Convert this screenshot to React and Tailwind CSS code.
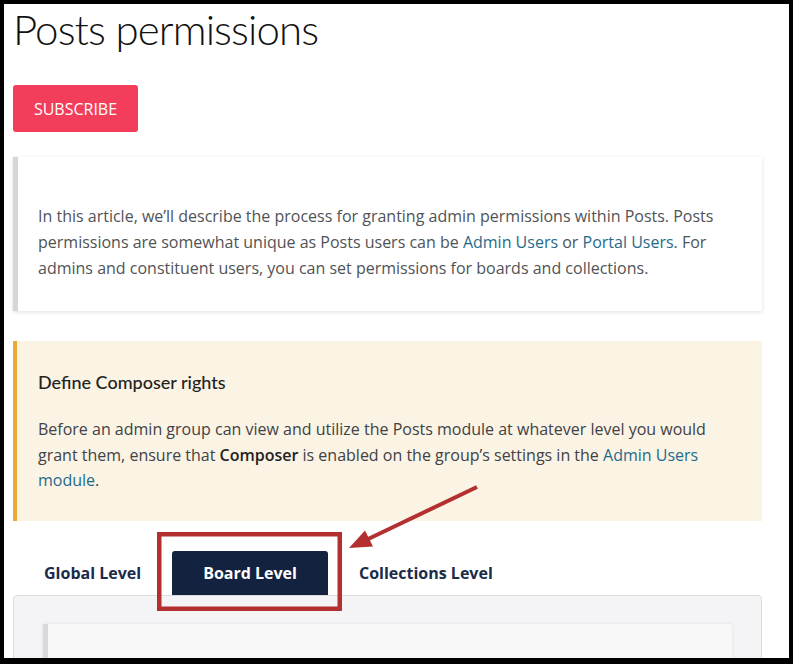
import React from 'react';

const body = { fontFamily: '"Open Sans", "Noto Sans", sans-serif' };
const display = { fontFamily: 'Lato, "Noto Sans", sans-serif' };

const Link = ({ children }) => (
    <a href="#" className="text-[#1f6b8c]">{children}</a>
);

const Tab = ({ label, active }) => (
    <div
        className={`h-[44px] px-[31px] flex items-center text-[16px] font-bold rounded-t-[3px] ${active ? 'bg-[#13223f] text-white' : 'text-[#1b2b4a]'}`}
        style={body}
    >
        {label}
    </div>
);

const App = () => {
    return (
        <div className="relative w-[793px] h-[664px] bg-black pt-[4px] pl-[4px] pr-[4px] pb-[6px]">
            <div className="w-full h-full bg-white overflow-hidden pl-[9px] pr-[27px]">
                {/* Title */}
                <h1 className="mt-[-1px] text-[42px] leading-[52px] font-light tracking-[-0.9px] text-[#111111]" style={display}>
                    Posts permissions
                </h1>

                {/* Subscribe */}
                <button
                    className="mt-[30px] w-[125px] h-[47px] rounded-[3px] bg-[#f23d5b] text-white text-[16px] uppercase"
                    style={body}
                >
                    Subscribe
                </button>

                {/* Intro */}
                <div className="mt-[25px] bg-white border-l-[5px] border-[#d6d6d6] shadow-[0_1px_4px_rgba(0,0,0,0.13)] pl-[20px] pr-[20px] pt-[47px] pb-[30px]">
                    <p className="text-[16px] leading-[25.8px] text-[#505356]" style={body}>
                        In this article, we’ll describe the process for granting admin permissions within Posts. Posts permissions are somewhat unique as Posts users can be <Link>Admin Users</Link> or <Link>Portal Users</Link>. For admins and constituent users, you can set permissions for boards and collections.
                    </p>
                </div>

                {/* Callout */}
                <div className="mt-[30px] bg-[#fbf3e3] border-l-[4px] border-[#e9a935] pl-[21px] pr-[20px] pt-[28px] pb-[28px]">
                    <h3 className="text-[18px] leading-[26px] font-medium text-[#222222]" style={display}>
                        Define Composer rights
                    </h3>
                    <p className="mt-[22px] text-[16px] leading-[25.2px] text-[#3f4247]" style={body}>
                        Before an admin group can view and utilize the Posts module at whatever level you would grant them, ensure that <strong className="font-semibold text-[#222]">Composer</strong> is enabled on the group’s settings in the <Link>Admin Users module</Link>.
                    </p>
                </div>

                {/* Tabs */}
                <div className="mt-[30px] flex">
                    <Tab label="Global Level" />
                    <Tab label="Board Level" active />
                    <Tab label="Collections Level" />
                </div>
                <div className="bg-[#f4f4f6] border border-[#dcdcdf] rounded-t-[4px] px-[29px] pt-[28px] h-[200px]">
                    <div className="h-[150px] bg-[#f8f8f9] border-l-[5px] border-[#d9d9d9] shadow-[0_0_3px_rgba(0,0,0,0.08)]" />
                </div>
            </div>

            {/* Annotation */}
            <svg className="absolute inset-0 pointer-events-none" width="793" height="664" viewBox="0 0 793 664">
                <rect x="159.25" y="534.25" width="180.5" height="74.5" fill="none" stroke="#b42f2f" strokeWidth="4.5" />
                <line x1="477" y1="487" x2="364" y2="541" stroke="#b42f2f" strokeWidth="4" />
                <polygon points="349,548 365,530.5 373,546.5" fill="#b42f2f" />
            </svg>
        </div>
    );
};

export default App;
